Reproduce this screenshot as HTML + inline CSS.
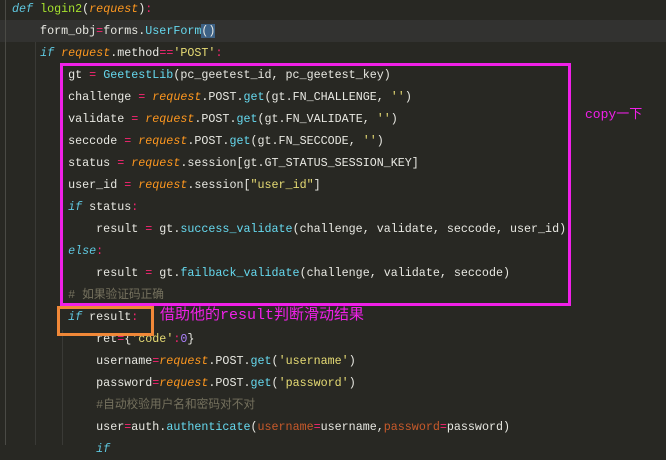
<!DOCTYPE html>
<html><head><meta charset="utf-8"><style>
html,body{margin:0;padding:0;background:#282823;width:666px;height:445px;overflow:hidden}
.code{position:absolute;left:0;top:-2px;width:666px;font-family:"Liberation Mono","Noto Sans CJK SC",monospace;font-size:11.7px;line-height:22px;color:#e8e8e2}
.l{height:22px;white-space:pre;padding-left:12px}
.cur{background:#323230}
.k{color:#5fc8e0;font-style:italic}
.f{color:#a6e22e}
.p{color:#fd971f;font-style:italic}
.o{color:#f92672}
.s{color:#e6db74}
.m{color:#66d9ef}
.c{color:#75715e}
.n{color:#ae81ff}
.kw{color:#c85a2b}
.g{position:absolute;top:0;width:1px;background:#3a3a36}
</style></head><body>
<div class="code">
<div class="l"><span class="k">def</span> <span class="f">login2</span>(<span class="p">request</span>)<span class="o">:</span></div>
<div class="l cur">    form_obj<span class="o">=</span>forms.<span class="m">UserForm</span><span style="background:#3d6185">()</span></div>
<div class="l">    <span class="k">if</span> <span class="p">request</span>.method<span class="o">==</span><span class="s">'POST'</span><span class="o">:</span></div>
<div class="l">        gt <span class="o">=</span> <span class="m">GeetestLib</span>(pc_geetest_id, pc_geetest_key)</div>
<div class="l">        challenge <span class="o">=</span> <span class="p">request</span>.POST.<span class="m">get</span>(gt.FN_CHALLENGE, <span class="s">''</span>)</div>
<div class="l">        validate <span class="o">=</span> <span class="p">request</span>.POST.<span class="m">get</span>(gt.FN_VALIDATE, <span class="s">''</span>)</div>
<div class="l">        seccode <span class="o">=</span> <span class="p">request</span>.POST.<span class="m">get</span>(gt.FN_SECCODE, <span class="s">''</span>)</div>
<div class="l">        status <span class="o">=</span> <span class="p">request</span>.session[gt.GT_STATUS_SESSION_KEY]</div>
<div class="l">        user_id <span class="o">=</span> <span class="p">request</span>.session[<span class="s">"user_id"</span>]</div>
<div class="l">        <span class="k">if</span> status<span class="o">:</span></div>
<div class="l">            result <span class="o">=</span> gt.<span class="m">success_validate</span>(challenge, validate, seccode, user_id)</div>
<div class="l">        <span class="k">else</span><span class="o">:</span></div>
<div class="l">            result <span class="o">=</span> gt.<span class="m">failback_validate</span>(challenge, validate, seccode)</div>
<div class="l">        <span class="c"># 如果验证码正确</span></div>
<div class="l">        <span class="k">if</span> result<span class="o">:</span></div>
<div class="l">            ret<span class="o">=</span>{<span class="s">'code'</span><span class="o">:</span><span class="n">0</span>}</div>
<div class="l">            username<span class="o">=</span><span class="p">request</span>.POST.<span class="m">get</span>(<span class="s">'username'</span>)</div>
<div class="l">            password<span class="o">=</span><span class="p">request</span>.POST.<span class="m">get</span>(<span class="s">'password'</span>)</div>
<div class="l">            <span class="c">#自动校验用户名和密码对不对</span></div>
<div class="l">            user<span class="o">=</span>auth.<span class="m">authenticate</span>(<span class="kw">username</span><span class="o">=</span>username,<span class="kw">password</span><span class="o">=</span>password)</div>
<div class="l">            <span class="k">if</span></div>
</div>
<div class="g" style="left:5px;height:445px;background:#4a4a45"></div>
<div class="g" style="left:35px;top:42px;height:403px"></div>
<div class="g" style="left:62px;top:330px;height:115px"></div>
<div style="position:absolute;left:60px;top:63px;width:505px;height:237px;border:3px solid #f020e8"></div>
<div style="position:absolute;left:57px;top:306px;width:91px;height:24px;border:3px solid #f08838"></div>
<div style="position:absolute;left:585px;top:103px;color:#f020e8;font-family:'Liberation Mono','Noto Sans CJK SC',monospace;font-size:13px">copy一下</div>
<div style="position:absolute;left:160px;top:305px;color:#f020e8;font-family:'Liberation Mono','Noto Sans CJK SC',monospace;font-size:15px;line-height:22px">借助他的result判断滑动结果</div>
</body></html>
